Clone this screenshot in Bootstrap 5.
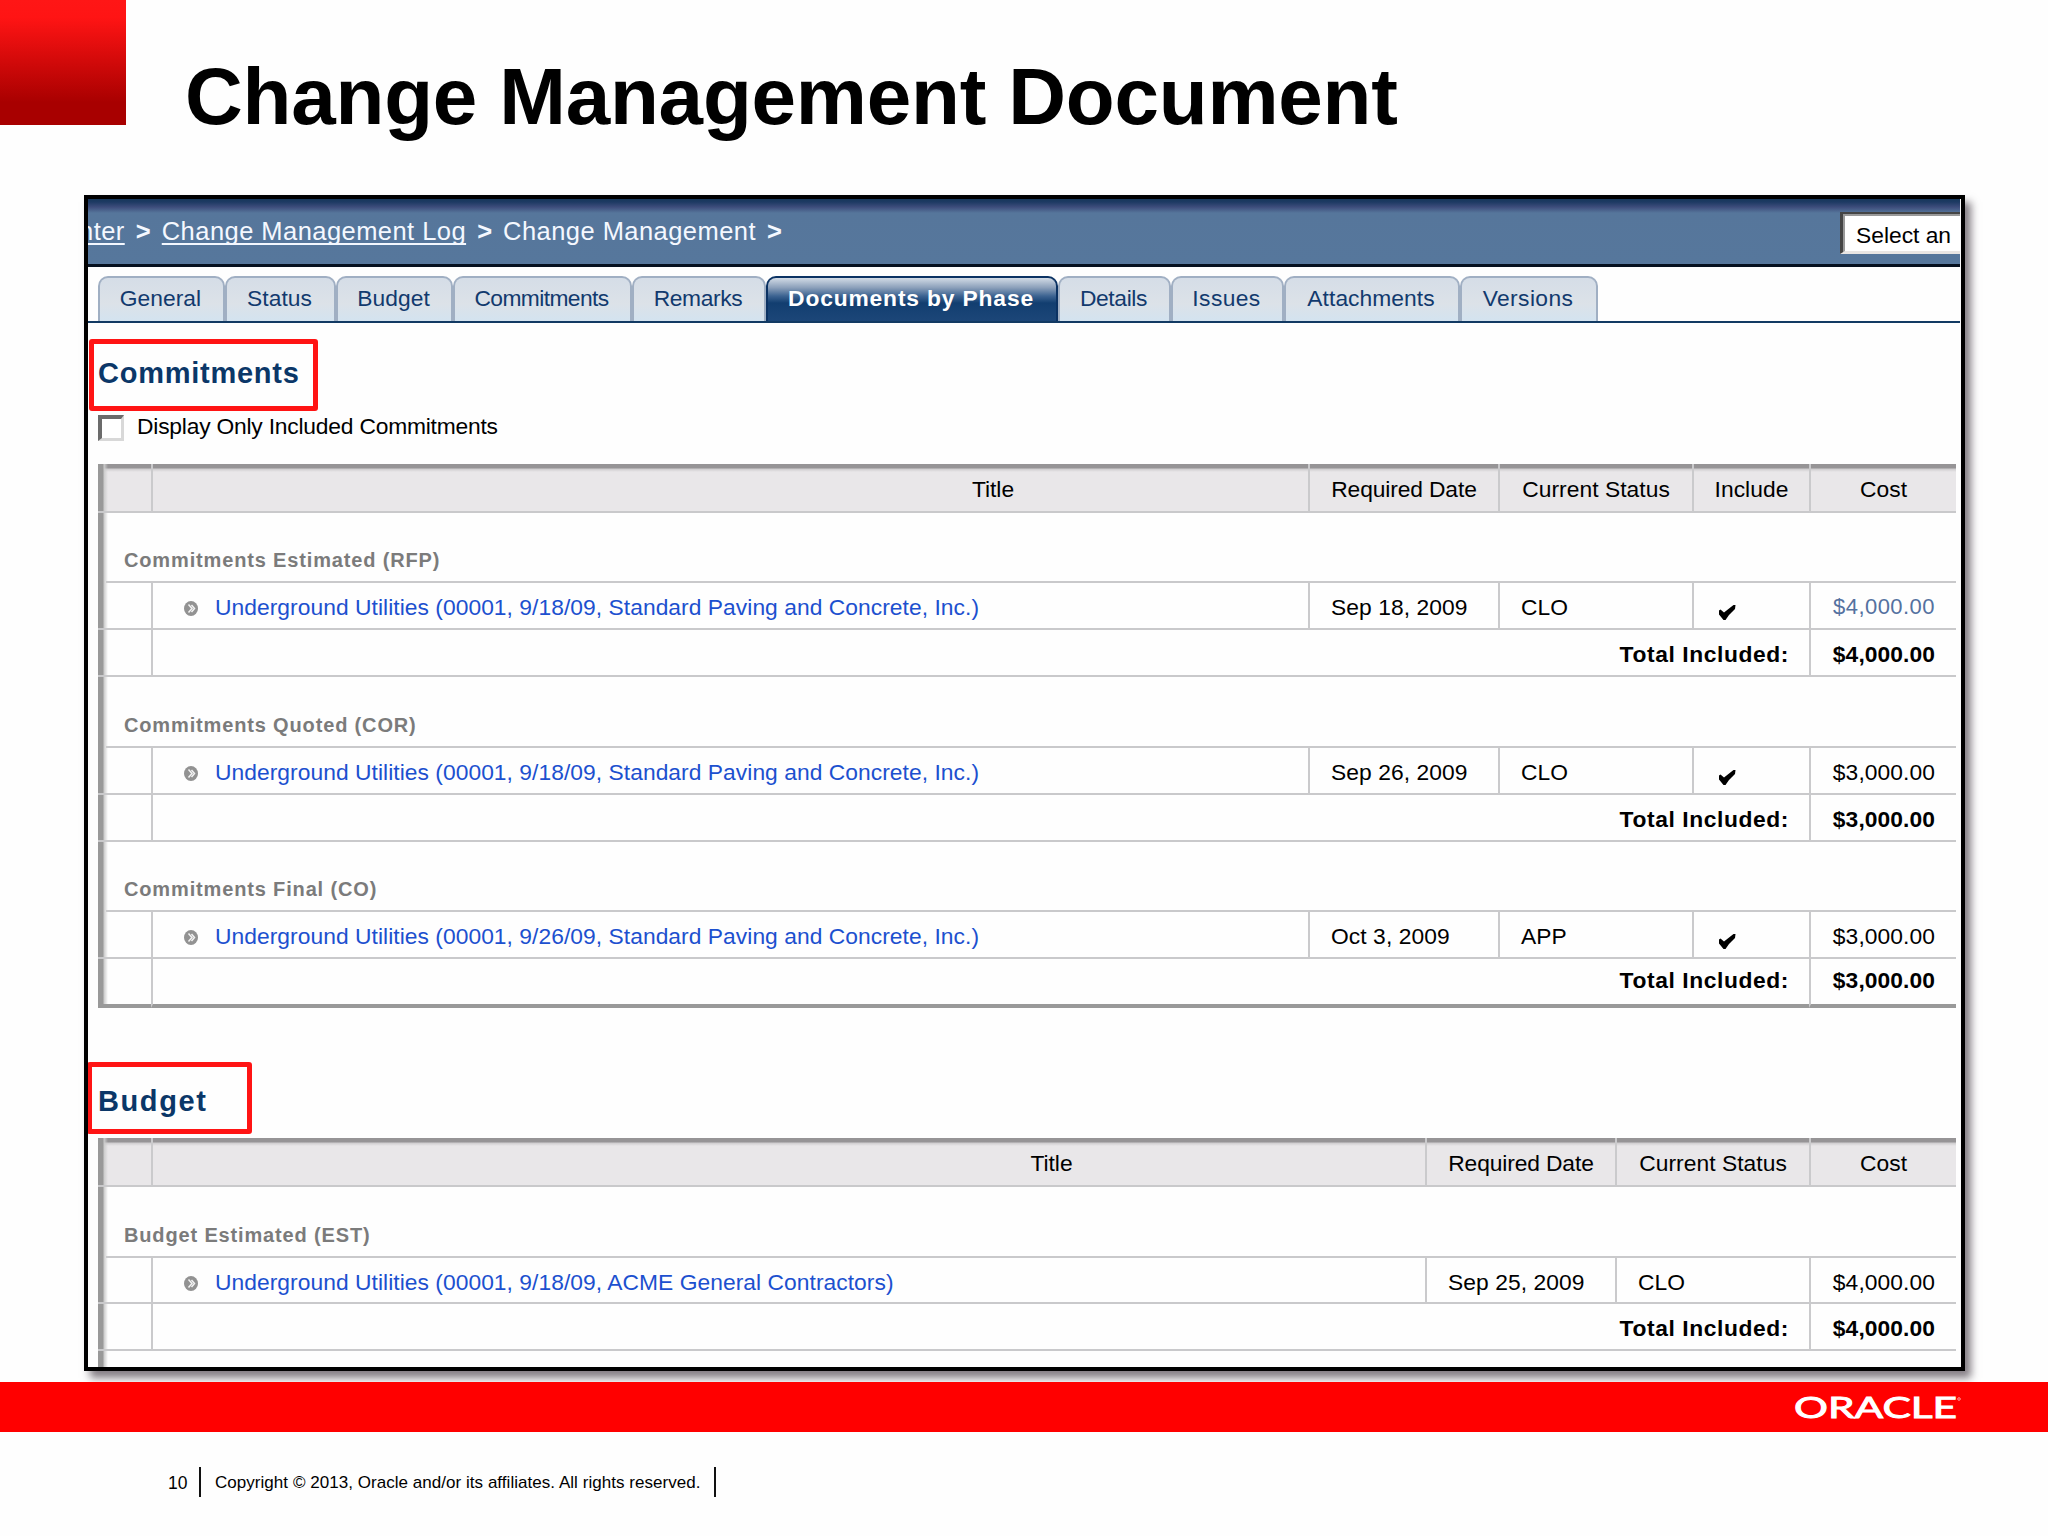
<!DOCTYPE html>
<html lang="en">
<head>
<meta charset="utf-8">
<title>Change Management Document</title>
<link href="https://cdn.jsdelivr.net/npm/bootstrap@5.3.0/dist/css/bootstrap.min.css" rel="stylesheet">
<style>
body{width:2048px;height:1536px;overflow:hidden;background:#fefefe;color:#000;font-family:"Liberation Sans",Arial,sans-serif;font-size:22.8px;line-height:1}
.slide-head{height:195px}
.red-block{width:126px;height:125px;background:linear-gradient(#ff1616 0,#ff1414 14%,#a80000 82%,#a80000)}
.slide-title{font-size:80px;font-weight:700;line-height:80px;margin:57px 0 0 59px;letter-spacing:-.2px}
.shot{width:1881px;height:1176px;margin-left:84px;border:4px solid #000;overflow:hidden;background:#fefefe;box-shadow:6px 7px 8px rgba(50,40,50,.6)}
.crumbs{height:68px;margin-right:1px;background:linear-gradient(#17375b 0,#1d3a63 3px,#3d4c7b 8px,#56769b 14px,#56779c);border-bottom:3px solid #05101f;color:#f4f8ff;font-size:25.5px;letter-spacing:.45px}
.crumbs a{color:#f4f8ff;text-decoration:underline;text-underline-offset:3px;text-decoration-thickness:2px;text-decoration-skip-ink:none}
.crumb-trail{padding-top:20px;margin-left:-9px;line-height:25px}
.crumb-trail b{letter-spacing:0;width:37px;text-align:center}
.picker{width:120px;height:42px;margin-top:13px;padding:7px 0 0 11px;background:#fff;color:#000;border:3px solid #777;border-top:4px groove #999;border-left:5px groove #999;border-bottom:3px solid #e9e6e4;border-right:0;font-size:22.8px;letter-spacing:0;line-height:24px}
.tabs-row{height:56px;padding:9px 0 0 10px;border-bottom:2px solid #123a63;margin-right:1px}
.tabs-row .nav-link{height:45px;padding:9px 2px 0 0;text-align:center;font-size:22.8px;line-height:23px;color:#123a6e;letter-spacing:.05px;border:2px solid #a0afc3;border-bottom:0;border-radius:10px 10px 0 0;background:linear-gradient(#d5dde7,#dce2e8 60%,#d3e3f0)}
.tabs-row .nav-link.active{border-color:#0b3263;color:#fff;font-weight:700;letter-spacing:.85px;background:linear-gradient(#d2dbe6 0,#8da1bb 22%,#3c6391 42%,#123e70 58%,#1c4678)}
.nav-item:nth-child(1){width:127px}.nav-item:nth-child(2){width:111px}.nav-item:nth-child(3){width:117px}.nav-item:nth-child(4){width:179px}.nav-item:nth-child(5){width:134px}.nav-item:nth-child(6){width:292px}.nav-item:nth-child(7){width:113px}.nav-item:nth-child(8){width:113px}.nav-item:nth-child(9){width:176px}.nav-item:nth-child(10){width:138px}
.tabs-row .tight{letter-spacing:-.6px}
.tabs-row .even{letter-spacing:-.35px}
.tabs-row .airy{letter-spacing:.4px}
.callout{border:5px solid #ff1414;border-radius:3px;color:#0b3768;font-size:29px;font-weight:700;line-height:28px}
.callout-a{width:229px;height:72px;margin:16px 0 0 1px;padding:15px 0 0 4px;letter-spacing:.75px}
.callout-b{width:165px;height:72px;margin:54px 0 0 -1px;padding:20px 0 0 6px;letter-spacing:1.6px}
.only-row{margin:4px 0 0 10px;height:49px}
.tick-box{width:26px;height:26px;background:#fff;border:3px solid #d8d8d8;border-top:4px solid #6b6b6b;border-left:4px solid #6b6b6b}
.only-row label{margin-left:13px;letter-spacing:-.2px;line-height:22px}
.log{width:1858px;margin-left:10px;table-layout:fixed;border-collapse:separate;border-spacing:0}
.log th,.log td{padding:4px 21px 0;border-bottom:2px solid #c9c9cb;border-left:2px solid #cacacc;vertical-align:middle;white-space:nowrap;letter-spacing:.08px}
.log tr>:first-child{border-left:0;background:linear-gradient(90deg,#999 0,#999 5px,#ccc 6px,rgba(255,255,255,0) 10px)}
.log thead th{height:49px;padding:4px 0 0;text-align:center;font-weight:400;letter-spacing:.05px;background:linear-gradient(#969496 4px,#cfcdcf 5px,#e9e7e9 8px)}
.log thead th:first-child{background:linear-gradient(90deg,#999 0,#999 5px,#ccc 6px,rgba(255,255,255,0) 10px),linear-gradient(#969496 4px,#cfcdcf 5px,#e9e7e9 8px)}
.log thead .ttl{padding-left:525px;letter-spacing:0}
.log thead .rd{letter-spacing:-.12px}
.log .grp td{height:70px;vertical-align:bottom;padding:0 0 13px 26px;border-bottom:0;font-size:20px;font-weight:700;color:#7b7b7b;letter-spacing:.85px;background:linear-gradient(90deg,#999 0,#999 5px,#ccc 6px,rgba(255,255,255,0) 10px),linear-gradient(#c9c9cb,#c9c9cb) 8px 100%/100% 2px no-repeat}
.log .grp.tall td{height:71px}
.log .ent td,.log .tot td{height:47px}
.log .ent.short td{height:46px}
.log .ent .doc{padding-left:31px;letter-spacing:.05px}
.doc svg{margin-bottom:1px}
.doc a{color:#1c50cf;text-decoration:none;margin-left:17px}
.log .money{text-align:right;padding-right:21px}
.log .tot td{font-weight:700;letter-spacing:.08px;padding-top:3px}
.log .tot .lbl{text-align:right;letter-spacing:.6px;padding-right:20px}
.log .tot.end td{height:49px;padding-top:0;padding-bottom:2px;border-bottom:4px solid #999}
.log .ent .pale{color:#5471a0;font-size:22px;letter-spacing:.45px;padding-top:2px}
.log .rest td{height:30px;border:0}
.band{height:50px;margin-top:11px;background:#f00;padding-right:75px}
.foot{height:104px;padding-left:168px;font-size:17px}
.foot .rule{width:2px;height:30px;background:#111;margin-top:35px}
.foot .pg{margin-top:43px;font-size:17.5px;width:31px}
.foot .cp{margin:42px 13px 0 14px;white-space:nowrap;letter-spacing:.04px}
</style>
<script src="https://cdn.jsdelivr.net/npm/bootstrap@5.3.0/dist/js/bootstrap.bundle.min.js"></script>
</head>
<body>
<svg width="0" height="0" class="position-absolute" aria-hidden="true">
  <symbol id="go" viewBox="0 0 14 15"><ellipse cx="7" cy="7.5" rx="7" ry="7.5" fill="#929292"/><path d="M4.5 3.5 8 7.5 4.5 11.5M7.5 4 10.5 7.5 7.5 11" fill="none" stroke="#f2f2f2" stroke-width="1.5"/></symbol>
  <symbol id="ok" viewBox="0 0 17 15"><path d="M0 5.5 1.5 4.5 5 7.5 14.5 0 16.5 0 16 4 10 10 6.5 15 4.5 15 0 9.5Z" fill="#000"/></symbol>
</svg>
<header class="slide-head d-flex align-items-start">
  <div class="red-block flex-shrink-0"></div>
  <h1 class="slide-title text-nowrap">Change Management Document</h1>
</header>
<main class="shot">
  <div class="crumbs d-flex justify-content-between">
    <div class="crumb-trail d-flex text-nowrap"><a href="#">nter</a><b>&gt;</b><a href="#">Change Management Log</a><b>&gt;</b><span>Change Management</span><b>&gt;</b></div>
    <div class="picker text-nowrap">Select an</div>
  </div>
  <ul class="nav tabs-row flex-nowrap">
    <li class="nav-item"><a class="nav-link" href="#">General</a></li>
    <li class="nav-item"><a class="nav-link" href="#">Status</a></li>
    <li class="nav-item"><a class="nav-link" href="#">Budget</a></li>
    <li class="nav-item"><a class="nav-link tight" href="#">Commitments</a></li>
    <li class="nav-item"><a class="nav-link even" href="#">Remarks</a></li>
    <li class="nav-item"><a class="nav-link active" href="#">Documents by Phase</a></li>
    <li class="nav-item"><a class="nav-link even" href="#">Details</a></li>
    <li class="nav-item"><a class="nav-link airy" href="#">Issues</a></li>
    <li class="nav-item"><a class="nav-link" href="#">Attachments</a></li>
    <li class="nav-item"><a class="nav-link airy" href="#">Versions</a></li>
  </ul>
  <h2 class="callout callout-a">Commitments</h2>
  <div class="only-row d-flex align-items-start"><span class="tick-box"></span><label>Display Only Included Commitments</label></div>
  <table class="log">
    <colgroup><col style="width:53px"><col><col style="width:190px"><col style="width:194px"><col style="width:117px"><col style="width:147px"></colgroup>
    <thead><tr><th></th><th class="ttl">Title</th><th class="rd">Required Date</th><th>Current Status</th><th>Include</th><th>Cost</th></tr></thead>
    <tbody>
      <tr class="grp"><td colspan="6">Commitments Estimated (RFP)</td></tr>
      <tr class="ent"><td></td><td class="doc"><svg width="14" height="15"><use href="#go"/></svg><a href="#">Underground Utilities (00001, 9/18/09, Standard Paving and Concrete, Inc.)</a></td><td>Sep 18, 2009</td><td>CLO</td><td><svg width="17" height="15" class="mt-2 ms-1"><use href="#ok"/></svg></td><td class="money pale">$4,000.00</td></tr>
      <tr class="tot"><td></td><td class="lbl" colspan="4">Total Included:</td><td class="money">$4,000.00</td></tr>
      <tr class="grp tall"><td colspan="6">Commitments Quoted (COR)</td></tr>
      <tr class="ent"><td></td><td class="doc"><svg width="14" height="15"><use href="#go"/></svg><a href="#">Underground Utilities (00001, 9/18/09, Standard Paving and Concrete, Inc.)</a></td><td>Sep 26, 2009</td><td>CLO</td><td><svg width="17" height="15" class="mt-2 ms-1"><use href="#ok"/></svg></td><td class="money">$3,000.00</td></tr>
      <tr class="tot"><td></td><td class="lbl" colspan="4">Total Included:</td><td class="money">$3,000.00</td></tr>
      <tr class="grp"><td colspan="6">Commitments Final (CO)</td></tr>
      <tr class="ent"><td></td><td class="doc"><svg width="14" height="15"><use href="#go"/></svg><a href="#">Underground Utilities (00001, 9/26/09, Standard Paving and Concrete, Inc.)</a></td><td>Oct 3, 2009</td><td>APP</td><td><svg width="17" height="15" class="mt-2 ms-1"><use href="#ok"/></svg></td><td class="money">$3,000.00</td></tr>
      <tr class="tot end"><td></td><td class="lbl" colspan="4">Total Included:</td><td class="money">$3,000.00</td></tr>
    </tbody>
  </table>
  <h2 class="callout callout-b mb-1">Budget</h2>
  <table class="log">
    <colgroup><col style="width:53px"><col><col style="width:190px"><col style="width:194px"><col style="width:147px"></colgroup>
    <thead><tr><th></th><th class="ttl">Title</th><th class="rd">Required Date</th><th>Current Status</th><th>Cost</th></tr></thead>
    <tbody>
      <tr class="grp tall"><td colspan="5">Budget Estimated (EST)</td></tr>
      <tr class="ent short"><td></td><td class="doc"><svg width="14" height="15"><use href="#go"/></svg><a href="#">Underground Utilities (00001, 9/18/09, ACME General Contractors)</a></td><td>Sep 25, 2009</td><td>CLO</td><td class="money">$4,000.00</td></tr>
      <tr class="tot"><td></td><td class="lbl" colspan="3">Total Included:</td><td class="money">$4,000.00</td></tr>
      <tr class="rest"><td></td><td colspan="4"></td></tr>
    </tbody>
  </table>
</main>
<div class="band d-flex justify-content-end align-items-center">
  <svg width="190" height="50" viewBox="0 0 190 50" overflow="visible" role="img" aria-label="Oracle"><text x="11" y="36" font-family="Lato, sans-serif" font-size="28.5" fill="#fff" stroke="#fff" stroke-width=".9" textLength="163" lengthAdjust="spacingAndGlyphs">ORACLE</text><circle cx="176" cy="17" r="1.3" fill="none" stroke="#fff" stroke-width=".6"/></svg>
</div>
<footer class="foot d-flex align-items-start"><span class="pg">10</span><span class="rule"></span><span class="cp">Copyright © 2013, Oracle and/or its affiliates. All rights reserved.</span><span class="rule"></span></footer>
</body>
</html>
